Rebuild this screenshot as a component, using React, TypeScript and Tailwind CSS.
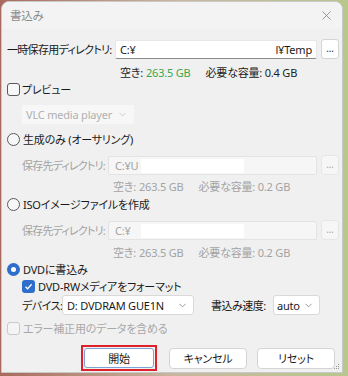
import { ChevronDown, X } from 'lucide-react'

function Checkbox({ checked = false, disabled = false }: { checked?: boolean; disabled?: boolean }) {
  if (checked) {
    return (
      <span className="w-[13px] h-[13px] rounded-[3px] bg-[#2f6ecb] flex items-center justify-center shrink-0">
        <svg width="9" height="9" viewBox="0 0 9 9">
          <path d="M1.5 4.8 L3.6 6.8 L7.6 2.2" fill="none" stroke="white" strokeWidth="1.3" />
        </svg>
      </span>
    )
  }
  return (
    <span
      className={
        disabled
          ? 'w-[13px] h-[13px] rounded-[3px] border border-[#c8c8c8] bg-[#f4f4f4] shrink-0'
          : 'w-[13px] h-[13px] rounded-[3px] border border-[#5a5a5a] bg-[#f7f7f7] shrink-0'
      }
    />
  )
}

function Radio({ checked = false }: { checked?: boolean }) {
  if (checked) {
    return (
      <span className="w-[13px] h-[13px] rounded-full bg-[#2f6ecb] flex items-center justify-center shrink-0">
        <span className="w-[5px] h-[5px] rounded-full bg-white" />
      </span>
    )
  }
  return <span className="w-[13px] h-[13px] rounded-full border border-[#5a5a5a] bg-[#f7f7f7] shrink-0" />
}

function Dots({ disabled = false }: { disabled?: boolean }) {
  return (
    <div
      className={
        disabled
          ? 'w-[18px] h-[20px] rounded-[3px] border border-[#e6e6e6] bg-[#f6f6f6] text-[#a8a8a8] flex items-center justify-center text-[10px] leading-none pb-[2px]'
          : 'w-[18px] h-[20px] rounded-[3px] border border-[#d4d4d4] bg-white text-[#333] flex items-center justify-center text-[10px] leading-none pb-[2px]'
      }
    >
      ...
    </div>
  )
}

function Space({ need, disabled = false }: { need: string; disabled?: boolean }) {
  return (
    <div className={disabled ? 'flex items-center h-[16px] text-[#a3a3a3]' : 'flex items-center h-[16px] text-[#222]'}>
      <span>空き:</span>
      <span className={disabled ? 'ml-[3px]' : 'ml-[3px] text-[#3aa84a]'}>263.5 GB</span>
      <span className="ml-[15px]">必要な容量: {need}</span>
    </div>
  )
}

function SaveDir({ prefix }: { prefix: string }) {
  return (
    <div className="flex items-center h-[20px] pl-[15px] mt-[8px]">
      <span className="w-[86px] shrink-0 text-[#a3a3a3] tracking-[-0.8px]">保存先ディレクトリ:</span>
      <div className="relative w-[209px] h-[19px] shrink-0 border border-[#e3e3e3] bg-[#f6f6f6] rounded-[2px] flex items-center pl-[6px] text-[#a3a3a3]">
        {prefix}
        <span className="absolute left-[32px] top-[2px] w-[103px] h-[14px] bg-white" />
      </div>
      <div className="ml-[4px]">
        <Dots disabled />
      </div>
    </div>
  )
}

export default function App() {
  return (
    <div className="w-[348px] h-[376px] bg-gradient-to-r from-[#a86a5c] via-[#c9b6a0] to-[#b7c78c] pt-[1px] pl-[1px] overflow-hidden">
      <div className="w-[342px] h-[372px] rounded-t-[8px] border border-[#c9c9c9] bg-[#f0f0f0] flex flex-col text-[11px] text-[#1a1a1a] font-['Noto_Sans','Noto_Sans_CJK_JP',sans-serif] [font-feature-settings:'palt'] tracking-[-0.2px] leading-none whitespace-nowrap relative overflow-hidden">
        <div className="h-[27px] bg-[#f3f3f3] flex items-center justify-between pl-[8px] pr-[8px] shrink-0">
          <span className="text-[#8c8c8c] text-[11.5px]">書込み</span>
          <X size={15} strokeWidth={1.2} className="text-[#7a7a7a]" />
        </div>

        <div className="flex flex-col pl-[5px]">
          <div className="flex items-center h-[20px] mt-[10px]">
            <span className="w-[108px] shrink-0 tracking-[-0.7px]">一時保存用ディレクトリ:</span>
            <div className="w-[202px] h-[19px] shrink-0 bg-white border border-[#e6e6e6] border-b-[#8a8a8a] rounded-[2px] flex items-center justify-between px-[4px]">
              <span>C:¥</span>
              <span>l¥Temp</span>
            </div>
            <div className="ml-[4px]">
              <Dots />
            </div>
          </div>

          <div className="pl-[113px] mt-[5px]">
            <Space need="0.4 GB" />
          </div>

          <div className="flex items-center h-[16px] mt-[1px] gap-[2px]">
            <Checkbox />
            <span>プレビュー</span>
          </div>

          <div className="pl-[15px] mt-[8px]">
            <div className="w-[112px] h-[19px] bg-[#f7f7f7] rounded-[2px] flex items-center justify-between pl-[4px] pr-[6px] text-[#b0b0b0]">
              <span>VLC media player</span>
              <ChevronDown size={11} strokeWidth={1.3} />
            </div>
          </div>

          <div className="flex items-center h-[16px] mt-[7px] gap-[3px]">
            <Radio />
            <span>生成のみ (オーサリング)</span>
          </div>

          <SaveDir prefix="C:¥U" />

          <div className="pl-[106px] mt-[3px]">
            <Space need="0.2 GB" disabled />
          </div>

          <div className="flex items-center h-[16px] mt-[2px] gap-[3px]">
            <Radio />
            <span>ISOイメージファイルを作成</span>
          </div>

          <SaveDir prefix="C:¥" />

          <div className="pl-[106px] mt-[4px]">
            <Space need="0.2 GB" disabled />
          </div>

          <div className="flex items-center h-[16px] mt-[1px] gap-[3px]">
            <Radio checked />
            <span>DVDに書込み</span>
          </div>

          <div className="flex items-center h-[16px] mt-[1px] gap-[3px] pl-[15px]">
            <Checkbox checked />
            <span>DVD-RWメディアをフォーマット</span>
          </div>

          <div className="flex items-center h-[20px] mt-[1px] pl-[15px]">
            <span className="w-[40px] shrink-0 tracking-[-0.5px]">デバイス:</span>
            <div className="w-[132px] h-[20px] shrink-0 bg-white border border-[#d9d9d9] rounded-[3px] flex items-center justify-between pl-[4px] pr-[5px]">
              <span>D: DVDRAM GUE1N</span>
              <ChevronDown size={11} strokeWidth={1.3} className="text-[#555]" />
            </div>
            <span className="ml-[17px] w-[62px] shrink-0 tracking-[-0.5px]">書込み速度:</span>
            <div className="w-[47px] h-[20px] shrink-0 bg-white border border-[#d9d9d9] rounded-[3px] flex items-center justify-between pl-[3px] pr-[5px]">
              <span>auto</span>
              <ChevronDown size={11} strokeWidth={1.3} className="text-[#555]" />
            </div>
          </div>

          <div className="flex items-center h-[16px] mt-[5px] gap-[3px] text-[#a8a8a8]">
            <Checkbox disabled />
            <span>エラー補正用のデータを含める</span>
          </div>

          <div className="flex items-center h-[26px] mt-[9px] pl-[74px]">
            <div className="w-[76px] h-[26px] shrink-0 border-2 border-[#e0202a] p-[1px]">
              <div className="w-full h-full bg-white border border-[#7aa3d8] rounded-[3px] flex items-center justify-center">
                開始
              </div>
            </div>
            <div className="ml-[12px] w-[78px] h-[21px] shrink-0 bg-white border border-[#d4d4d4] rounded-[4px] flex items-center justify-center">
              キャンセル
            </div>
            <div className="ml-[10px] w-[78px] h-[21px] shrink-0 bg-white border border-[#d4d4d4] rounded-[4px] flex items-center justify-center">
              リセット
            </div>
          </div>
        </div>

        <div className="absolute right-[2px] bottom-[2px] w-[6px] h-[6px] grid grid-cols-3">
          <span />
          <span />
          <span className="w-[1px] h-[1px] bg-[#9a9a9a]" />
          <span />
          <span className="w-[1px] h-[1px] bg-[#9a9a9a]" />
          <span className="w-[1px] h-[1px] bg-[#9a9a9a]" />
          <span className="w-[1px] h-[1px] bg-[#9a9a9a]" />
          <span className="w-[1px] h-[1px] bg-[#9a9a9a]" />
          <span className="w-[1px] h-[1px] bg-[#9a9a9a]" />
        </div>
      </div>
    </div>
  )
}
